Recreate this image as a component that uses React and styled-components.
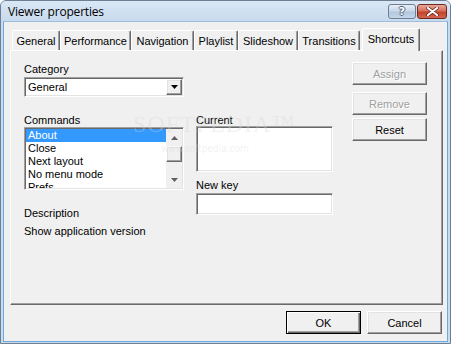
import React from "react";
import styled, { createGlobalStyle, css } from "styled-components";

const GlobalStyle = createGlobalStyle`
  html, body {
    margin: 0;
    padding: 0;
    background: #fff;
  }
  body {
    font-family: "Liberation Sans", Arial, sans-serif;
    font-size: 11px;
    color: #000;
  }
`;

const raised = css`
  border: 1px solid;
  border-color: #fff #696969 #696969 #fff;
  box-shadow: inset -1px -1px #a0a0a0, inset 1px 1px #e3e3e3;
`;

const sunken = css`
  border: 1px solid;
  border-color: #a0a0a0 #fff #fff #a0a0a0;
  box-shadow: inset 1px 1px #696969, inset -1px -1px #e3e3e3;
  padding: 1px;
  background: #fff;
`;

const Window = styled.div`
  box-sizing: border-box;
  width: 451px;
  height: 344px;
  border: 1px solid #6e7f93;
  border-radius: 6px 6px 0 0;
  background: #c9dbef;
  display: flex;
  flex-direction: column;
  overflow: hidden;
`;

const TitleBar = styled.div`
  height: 20px;
  flex: none;
  display: flex;
  align-items: flex-start;
  padding: 3px 3px 0 7px;
  box-sizing: border-box;
  background: linear-gradient(#dae7f5, #c8daee);
`;

const Title = styled.span`
  flex: 1;
  font-family: "Open Sans", "Noto Sans", sans-serif;
  font-size: 12px;
  line-height: 16px;
  letter-spacing: -0.2px;
  color: #000;
`;

const CaptionButtons = styled.div`
  display: flex;
  gap: 1px;
`;

const CaptionButton = styled.div`
  box-sizing: border-box;
  width: ${(p) => p.$w}px;
  height: 15px;
  border-radius: 3px;
  display: flex;
  align-items: center;
  justify-content: center;
  ${(p) =>
    p.$close
      ? css`
          border: 1px solid #6b2c20;
          background: linear-gradient(#e8a898 0%, #d7705c 45%, #c2432d 55%, #d36550 100%);
        `
      : css`
          border: 1px solid #6f7e92;
          background: linear-gradient(#e6eef8 0%, #c9d8ea 45%, #b3c7df 55%, #c4d6ec 100%);
        `}
`;

const HelpGlyph = styled.span`
  font-family: "DejaVu Sans", sans-serif;
  font-weight: bold;
  font-size: 11px;
  line-height: 11px;
  color: #fff;
  text-shadow: 1px 0 #55667c, -1px 0 #55667c, 0 1px #55667c, 0 -1px #55667c;
`;

const Client = styled.div`
  flex: 1;
  margin: 0 2px 1px 2px;
  border: 1px solid #6fa9dc;
  border-top-color: #9fbddd;
  background: #f0f0f0;
  display: flex;
  flex-direction: column;
`;

const Body = styled.div`
  margin: 6px 0 0 6px;
  width: 433px;
`;

const TabStrip = styled.div`
  display: flex;
  align-items: flex-end;
  height: 22px;
  padding-left: 2px;
`;

const Tab = styled.div`
  box-sizing: border-box;
  width: ${(p) => p.$w}px;
  height: ${(p) => (p.$active ? 23 : 20)}px;
  margin-left: ${(p) => (p.$active ? 2 : 0)}px;
  margin-bottom: ${(p) => (p.$active ? -1 : 0)}px;
  position: relative;
  z-index: ${(p) => (p.$active ? 1 : 0)};
  border-left: 1px solid #fff;
  border-top: 1px solid #fff;
  border-right: 1px solid #696969;
  box-shadow: inset -1px 0 #a0a0a0;
  border-radius: 2px 2px 0 0;
  background: #f0f0f0;
  text-align: center;
  white-space: nowrap;
  line-height: 13px;
  padding-top: ${(p) => (p.$active ? 4 : 4)}px;
`;

const Panel = styled.div`
  position: relative;
  box-sizing: border-box;
  height: 255px;
  border: 1px solid;
  border-color: #fff #696969 #696969 #fff;
  box-shadow: inset -1px -1px #a0a0a0;
  background: #f0f0f0;
  padding: 11px 0 0 13px;
  display: flex;
  align-items: flex-start;
`;

const Column = styled.div`
  display: flex;
  flex-direction: column;
  width: ${(p) => p.$w}px;
  margin-top: ${(p) => p.$top || 0}px;
  margin-right: ${(p) => p.$gap || 0}px;
`;

const Label = styled.div`
  box-sizing: border-box;
  line-height: 13px;
  height: 13px;
  padding-top: 1px;
  margin-top: ${(p) => p.$top || 0}px;
  margin-bottom: ${(p) => p.$bottom || 0}px;
  white-space: nowrap;
`;

const Select = styled.div`
  box-sizing: border-box;
  height: 20px;
  ${sunken}
  display: flex;
  align-items: center;
`;

const SelectValue = styled.div`
  flex: 1;
  padding: 1px 0 0 2px;
  line-height: 13px;
`;

const DropButton = styled.div`
  box-sizing: border-box;
  width: 16px;
  height: 16px;
  ${raised}
  background: #f0f0f0;
  display: flex;
  align-items: center;
  justify-content: center;
`;

const List = styled.div`
  box-sizing: border-box;
  height: 63px;
  margin-top: 1px;
  ${sunken}
  display: flex;
`;

const Items = styled.div`
  flex: 1;
  overflow: hidden;
`;

const Item = styled.div`
  height: 13px;
  line-height: 13px;
  padding-left: 2px;
  white-space: nowrap;
  background: ${(p) => (p.$selected ? "#3399ff" : "transparent")};
  color: ${(p) => (p.$selected ? "#fff" : "#000")};
`;

const ScrollBar = styled.div`
  width: 16px;
  display: flex;
  flex-direction: column;
  background: #f0f0f0;
`;

const Arrow = styled.div`
  height: 17px;
  display: flex;
  align-items: center;
  justify-content: center;
`;

const Thumb = styled.div`
  box-sizing: border-box;
  height: 16px;
  ${raised}
  background: #f0f0f0;
`;

const Track = styled.div`
  flex: 1;
`;

const Field = styled.div`
  box-sizing: border-box;
  height: ${(p) => p.$h}px;
  ${sunken}
`;

const Button = styled.div`
  box-sizing: border-box;
  width: 75px;
  height: 23px;
  margin-top: ${(p) => p.$top || 0}px;
  padding-top: 1px;
  background: #f0f0f0;
  display: flex;
  align-items: center;
  justify-content: center;
  line-height: 13px;
  ${(p) =>
    p.$primary
      ? css`
          border: 1px solid #000;
          box-shadow: inset 1px 1px #fff, inset -1px -1px #696969, inset -2px -2px #a0a0a0;
        `
      : raised}
  ${(p) =>
    p.$disabled &&
    css`
      color: #a0a0a0;
      text-shadow: 1px 1px #fff;
    `}
`;

const Footer = styled.div`
  display: flex;
  justify-content: flex-end;
  gap: 6px;
  margin-top: 6px;
  padding-right: 5px;
`;

const Watermark = styled.div`
  position: absolute;
  left: 122px;
  top: 62px;
  pointer-events: none;
  color: rgba(215, 215, 215, 0.35);
  font-family: "Liberation Serif", serif;
`;

const MarkBig = styled.div`
  font-size: 24px;
  line-height: 22px;
  letter-spacing: 1px;
`;

const MarkSmall = styled.div`
  font-family: "DejaVu Sans Condensed", "DejaVu Sans", sans-serif;
  font-size: 10px;
  margin: 8px 0 0 28px;
`;

const tabs = [
  ["General", 48],
  ["Performance", 71],
  ["Navigation", 63],
  ["Playlist", 44],
  ["Slideshow", 60],
  ["Transitions", 62],
];

const commands = ["About", "Close", "Next layout", "No menu mode", "Prefs"];

const Tri = ({ up, color = "#000" }) => (
  <svg width="7" height="4" viewBox="0 0 7 4">
    <path d={up ? "M3.5 0 L7 4 L0 4 Z" : "M0 0 L7 0 L3.5 4 Z"} fill={color} />
  </svg>
);

export default function App() {
  return (
    <>
      <GlobalStyle />
      <Window>
        <TitleBar>
          <Title>Viewer properties</Title>
          <CaptionButtons>
            <CaptionButton $w={28}>
              <HelpGlyph>?</HelpGlyph>
            </CaptionButton>
            <CaptionButton $w={30} $close>
              <svg width="13" height="9" viewBox="0 0 13 9">
                <path
                  d="M2 1 L11 8 M11 1 L2 8"
                  stroke="#5a1a10"
                  strokeWidth="3.4"
                  strokeLinecap="round"
                />
                <path
                  d="M2 1 L11 8 M11 1 L2 8"
                  stroke="#fff"
                  strokeWidth="2.2"
                  strokeLinecap="round"
                />
              </svg>
            </CaptionButton>
          </CaptionButtons>
        </TitleBar>
        <Client>
          <Body>
            <TabStrip>
              {tabs.map(([name, w]) => (
                <Tab key={name} $w={w}>
                  {name}
                </Tab>
              ))}
              <Tab $w={58} $active>
                Shortcuts
              </Tab>
            </TabStrip>
            <Panel>
              <Column $w={160} $gap={12}>
                <Label $bottom={2}>Category</Label>
                <Select>
                  <SelectValue>General</SelectValue>
                  <DropButton>
                    <Tri />
                  </DropButton>
                </Select>
                <Label $top={16}>Commands</Label>
                <List>
                  <Items>
                    {commands.map((c, i) => (
                      <Item key={c} $selected={i === 0}>
                        {c}
                      </Item>
                    ))}
                  </Items>
                  <ScrollBar>
                    <Arrow>
                      <Tri up color="#606060" />
                    </Arrow>
                    <Thumb />
                    <Track />
                    <Arrow>
                      <Tri color="#606060" />
                    </Arrow>
                  </ScrollBar>
                </List>
                <Label $top={16}>Description</Label>
                <Label $top={5}>Show application version</Label>
              </Column>
              <Column $w={137} $gap={19} $top={51}>
                <Label>Current</Label>
                <Field $h={46} />
                <Label $top={6} $bottom={2}>
                  New key
                </Label>
                <Field $h={22} />
              </Column>
              <Column $w={75}>
                <Button $disabled>Assign</Button>
                <Button $disabled $top={7}>
                  Remove
                </Button>
                <Button $top={3}>Reset</Button>
              </Column>
              <Watermark>
                <MarkBig>SOFTPEDIA™</MarkBig>
                <MarkSmall>www.softpedia.com</MarkSmall>
              </Watermark>
            </Panel>
          </Body>
          <Footer>
            <Button $primary>OK</Button>
            <Button>Cancel</Button>
          </Footer>
        </Client>
      </Window>
    </>
  );
}
